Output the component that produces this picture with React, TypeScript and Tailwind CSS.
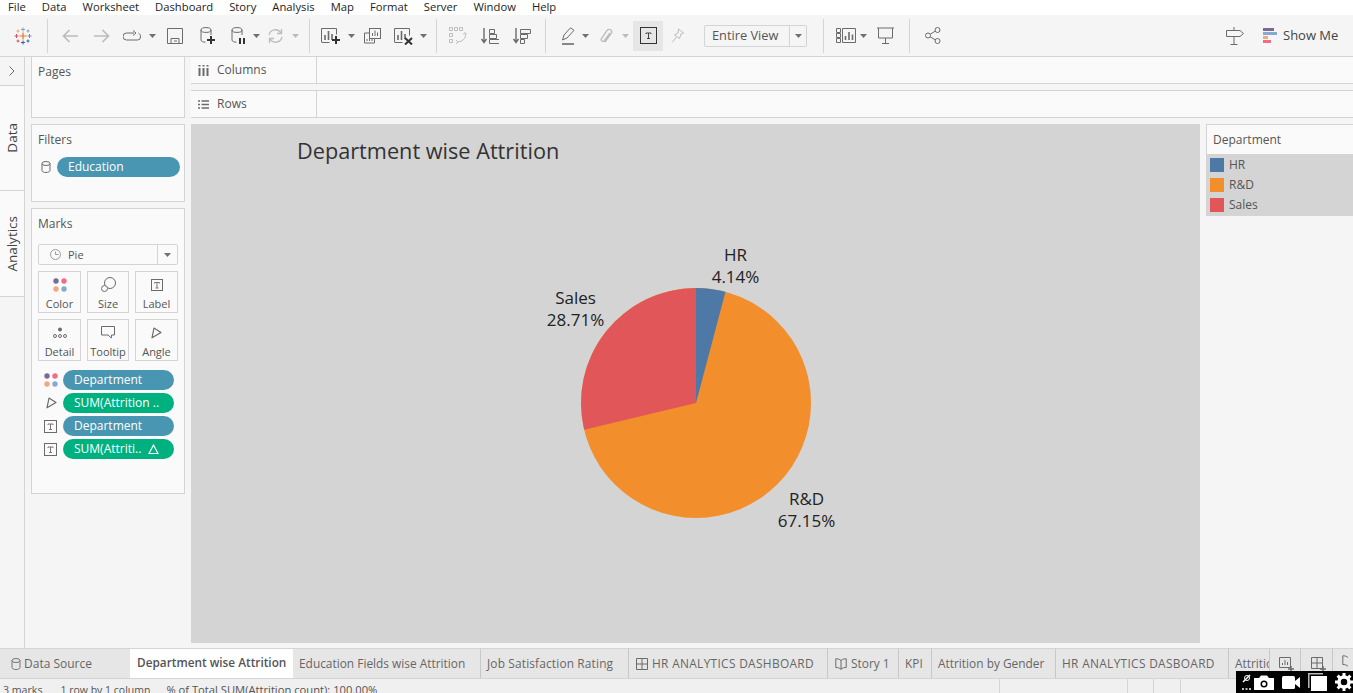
import React from "react";

const G = "#6b6b6b";
const L = "#bcbcbc";

function I({ w, h, className, children }: { w: number; h: number; className?: string; children: React.ReactNode }) {
  return (
    <svg width={w} height={h} viewBox={`0 0 ${w} ${h}`} fill="none" className={"shrink-0 " + (className ?? "")}>
      {children}
    </svg>
  );
}

function Caret({ className, light }: { className?: string; light?: boolean }) {
  return (
    <I w={7} h={4} className={className}>
      <path d="M0 0h7L3.5 4z" fill={light ? L : "#707070"} />
    </I>
  );
}

function Sep({ className }: { className?: string }) {
  return <div className={"h-[34px] w-px shrink-0 bg-[#d4d4d4] " + (className ?? "")} />;
}

function Cross({ x, y, r, c, t = 1 }: { x: number; y: number; r: number; c: string; t?: number }) {
  return <path d={`M${x - r} ${y}h${2 * r}M${x} ${y - r}v${2 * r}`} stroke={c} strokeWidth={t} />;
}

function Logo({ className }: { className?: string }) {
  return (
    <I w={18} h={18} className={className}>
      <Cross x={9} y={9} r={3.5} c="#e8762c" t={1.2} />
      <Cross x={9} y={2.5} r={2} c="#7fa6b8" />
      <Cross x={9} y={15.5} r={2} c="#3b5f95" />
      <Cross x={2.5} y={9} r={2} c="#d4505f" />
      <Cross x={15.5} y={9} r={2} c="#7f88ad" />
      <Cross x={4} y={4} r={1.5} c="#eda06c" />
      <Cross x={14} y={4} r={1.5} c="#7fa6b8" />
      <Cross x={4} y={14} r={1.5} c="#d4505f" />
      <Cross x={14} y={14} r={1.5} c="#3b5f95" />
    </I>
  );
}

function Db({ c = G, className }: { c?: string; className?: string }) {
  return (
    <I w={10} h={12} className={className}>
      <ellipse cx={5} cy={2.5} rx={4} ry={2} stroke={c} />
      <path d="M1 2.5v7c0 1.2 1.8 2 4 2s4-.8 4-2v-7" stroke={c} />
    </I>
  );
}

function TBox({ className, size = 12, c = G }: { className?: string; size?: number; c?: string }) {
  return (
    <I w={size} h={size} className={className}>
      <rect x={0.5} y={0.5} width={size - 1} height={size - 1} stroke={c} />
      <path d={`M${size / 2 - 2.5} ${size / 2 - 1.5}v-1h5v1M${size / 2} ${size / 2 - 2.5}v5.5M${size / 2 - 1.5} ${size / 2 + 3}h3`} stroke={c} strokeWidth={0.9} />
    </I>
  );
}

function Dots({ className }: { className?: string }) {
  return (
    <I w={14} h={14} className={className}>
      <circle cx={3} cy={3} r={2.7} fill="#7b6a96" />
      <circle cx={11} cy={3} r={2.7} fill="#ef6f80" />
      <circle cx={3} cy={11} r={2.7} fill="#f3a77b" />
      <circle cx={11} cy={11} r={2.7} fill="#85a9d0" />
    </I>
  );
}

function AngleIcon({ className }: { className?: string }) {
  return (
    <I w={11} h={12} className={className}>
      <path d="M3 1 10 5.500 1 10.800Z" stroke={G} strokeWidth={1.2} strokeLinejoin="round" />
    </I>
  );
}

function Toolbar() {
  return (
    <div className="flex h-[42px] shrink-0 items-center border-b border-[#d4d4d4] bg-[#f5f5f5]">
      <Logo className="ml-[14px]" />
      <Sep className="ml-[15px]" />
      <I w={16} h={14} className="ml-[14px]"><path d="M16 7H1.5M7.5 1 1.5 7l6 6" stroke={L} strokeWidth={1.7} /></I>
      <I w={16} h={14} className="ml-[16px]"><path d="M0 7h14.5M8.5 1l6 6-6 6" stroke={L} strokeWidth={1.7} /></I>
      <I w={18} h={12} className="ml-[13px]"><path d="M11 3H3.5a3 3 0 0 0 0 7h11a3 3 0 0 0 3-3c0-2-.7-3-2-4M10 .5 13 3l-3 2.5" stroke={G} /></I>
      <Caret className="ml-[8px]" />
      <I w={16} h={16} className="ml-[11px]"><path d="M.5.5h15v15H.5zM4 15.5v-5h8v5M7 13h3" stroke={G} /></I>
      <I w={15} h={18} className="ml-[17px]">
        <ellipse cx={6} cy={3} rx={5} ry={2.4} stroke={G} />
        <path d="M1 3v10c0 1.3 2 2.2 4.5 2.2M11 3v5" stroke={G} />
        <path d="M11 9v8M7 13h8" stroke="#333" strokeWidth={2} />
      </I>
      <I w={14} h={18} className="ml-[16px]">
        <ellipse cx={6} cy={3} rx={5} ry={2.4} stroke={G} />
        <path d="M1 3v10c0 1.3 2 2.2 4.5 2.2M11 3v5" stroke={G} />
        <path d="M9 11v6M13 11v6" stroke="#333" strokeWidth={2} />
      </I>
      <Caret className="ml-[8px]" />
      <I w={17} h={16} className="ml-[7px]"><path d="M2 7a6.5 6.5 0 0 1 12-2M15 9a6.5 6.5 0 0 1-12 2M14.5 1v4.5H10M2.5 15v-4.5H7" stroke={L} strokeWidth={1.3} /></I>
      <Caret light className="ml-[8px]" />
      <Sep className="ml-[10px]" />
      <I w={21} h={18} className="ml-[11px]">
        <path d="M.5 15V1.5h15v6M.5 15.5h8" stroke={G} />
        <path d="M4 13V8M7.5 13V4M11 13V7" stroke={G} strokeWidth={1.6} />
        <path d="M15 9v8M11 13h8" stroke="#333" strokeWidth={2} />
      </I>
      <Caret className="ml-[6px]" />
      <I w={17} h={16} className="ml-[9px]">
        <rect x={5.5} y={0.5} width={11} height={10} stroke={G} />
        <path d="M8.5 8V5M11 8V2.5M13.5 8V4.5" stroke={G} />
        <path d="M5 5H.5v10h10v-4M3 13v-2M5.500 13v-3M8 13v-2" stroke={G} />
      </I>
      <I w={19} h={18} className="ml-[13px]">
        <path d="M.5 15V1.5h15v7M.5 15.5h8" stroke={G} />
        <path d="M4 13V8M7.5 13V4M11 12V7" stroke={G} strokeWidth={1.6} />
        <path d="m11 11 7 6.5M18 11l-7 6.5" stroke="#333" strokeWidth={2} />
      </I>
      <Caret className="ml-[7px]" />
      <Sep className="ml-[9px]" />
      <I w={18} h={17} className="ml-[12px]">
        <path d="M.5.5h3v3h-3zM5.500.5h3v3h-3zM10.500.5h3v3h-3zM.5 6.500h3v3h-3zM.5 12.500h3v3h-3z" stroke={L} />
        <path d="M16 6c1.500 4-1 8-7 9M7 13l2 2-2 2M14 7.500 16 5.500l2 2" stroke={L} />
      </I>
      <I w={18} h={16} className="ml-[14px]">
        <path d="M3 0v14M.5 11 3 14.500 5.500 11" stroke={G} strokeWidth={1.4} />
        <path d="M8.500 1.500h5v4h-5zM8.500 6.500h7v4h-7zM8.500 11.500h10v4h-10z" stroke={G} />
      </I>
      <I w={18} h={16} className="ml-[14px]">
        <path d="M3 0v14M.5 11 3 14.500 5.500 11" stroke={G} strokeWidth={1.4} />
        <path d="M7.500 1.500h10v4h-10zM7.500 6.500h7v4h-7zM7.500 11.500h4v4h-4z" stroke={G} />
      </I>
      <Sep className="ml-[14px]" />
      <I w={13} h={18} className="ml-[16px]">
        <path d="M.5 13 2 8 8.500.8l3.500 2.500L5 11z" stroke={G} />
        <path d="M0 17h12" stroke={G} strokeWidth={1.6} />
      </I>
      <Caret className="ml-[7px]" />
      <I w={14} h={16} className="ml-[10px]"><path d="M11 5 5.500 12.500c-1.500 2-4.500 0-3-2L8 2.500c2-2.500 6 0 4.500 2.500L6 14" stroke={L} strokeWidth={1.3} /></I>
      <Caret light className="ml-[9px]" />
      <div className="ml-[4px] flex h-[30px] w-[30px] shrink-0 items-center justify-center bg-[#e6e6e6]">
        <TBox size={17} c="#333" />
      </div>
      <I w={13} h={16} className="ml-[8px]"><path d="m7.500 1 5 4-2.500 1-1.500 4.500L3.500 7l3.500-2zM5.500 9 1 14.500" stroke={L} /></I>
      <div className="ml-[20px] flex h-[22px] w-[103px] shrink-0 items-center rounded-[2px] border border-[#d4d4d4] text-[12.8px] text-[#555]">
        <span className="w-[84px] pl-[7px]">Entire View</span>
        <div className="flex h-full flex-1 items-center justify-center border-l border-[#d4d4d4]">
          <Caret />
        </div>
      </div>
      <Sep className="ml-[16px]" />
      <I w={20} h={15} className="ml-[12px]">
        <path d="M.5.5h4v4h-4zM.5 5.500h4v4h-4zM.5 10.500h4v4h-4zM6.500.5h13v14h-13z" stroke={G} />
        <path d="M9.500 12V8M13 12V4M16.500 12V6.500" stroke={G} strokeWidth={1.6} />
      </I>
      <Caret className="ml-[4px]" />
      <I w={17} h={17} className="ml-[10px]">
        <path d="M0 1h17M1.500 1v10h14V1M8.500 11v5M5 16.500h7" stroke={G} />
      </I>
      <Sep className="ml-[15px]" />
      <I w={16} h={17} className="ml-[15px]">
        <circle cx={3} cy={8.500} r={2.500} stroke={G} />
        <circle cx={12.500} cy={3} r={2.500} stroke={G} />
        <circle cx={12.500} cy={14} r={2.500} stroke={G} />
        <path d="m5.200 7.200 5-3M5.200 9.800l5 3" stroke={G} />
      </I>
      <I w={18} h={18} className="ml-[285px]">
        <path d="M.5 3.500h13.500l3.500 3-3.500 3H.5zM8 0v3.500M8 9.500V17M4.500 17.500h7" stroke={G} />
      </I>
      <I w={14} h={16} className="ml-[19px]">
        <path d="M0 1.500h11" stroke="#7b6a96" strokeWidth={3} />
        <path d="M0 5.500h14" stroke="#85a9d0" strokeWidth={3} />
        <path d="M0 9.500h5" stroke="#f3a77b" strokeWidth={3} />
        <path d="M0 13.500h8" stroke="#ef6f80" strokeWidth={3} />
      </I>
      <span className="ml-[6px] text-[13px] text-[#444]">Show Me</span>
    </div>
  );
}

function Rail() {
  return (
    <div className="flex w-[25px] shrink-0 flex-col border-r border-[#d4d4d4] text-[13.5px] text-[#444]">
      <div className="flex h-[29px] items-center justify-center border-b border-[#d4d4d4]">
        <I w={6} h={10}><path d="m.5.5 4.500 4.500L.5 9.500" stroke={G} /></I>
      </div>
      <div className="flex h-[105px] items-center justify-center border-b border-[#d4d4d4] bg-[#fafafa] pl-[1px]">
        <span className="rotate-180 [writing-mode:vertical-rl]">Data</span>
      </div>
      <div className="flex h-[106px] items-center justify-center border-b border-[#d4d4d4] bg-[#fafafa] pl-[1px]">
        <span className="rotate-180 [writing-mode:vertical-rl]">Analytics</span>
      </div>
    </div>
  );
}

function Pill({ color, wide, children }: { color: "blue" | "green"; wide?: boolean; children: React.ReactNode }) {
  return (
    <div
      className={
        "flex h-[20px] items-center rounded-full pl-[11px] text-[12px] leading-none text-white " +
        (color === "blue" ? "bg-[#4996b2] " : "bg-[#00b180] ") +
        (wide ? "w-[123px]" : "w-[111px]")
      }
    >
      {children}
    </div>
  );
}

function MarkBtn({ label, icon }: { label: string; icon: React.ReactNode }) {
  return (
    <div className="flex h-[42px] flex-col items-center border border-[#d4d4d4] text-[11px] leading-none text-[#555]">
      <div className="flex h-[25px] items-center justify-center">{icon}</div>
      <span className="mt-[1px]">{label}</span>
    </div>
  );
}

function LeftPane() {
  return (
    <div className="ml-[6px] flex w-[154px] shrink-0 flex-col gap-[6px]">
      <div className="h-[61px] border border-t-0 border-[#d4d4d4] bg-[#fafafa] pl-[6px] pt-[7px] text-[12px] leading-[16px] text-[#555]">Pages</div>
      <div className="h-[78px] border border-[#d4d4d4] bg-[#fafafa] pl-[6px] pt-[7px] text-[12px] leading-[16px] text-[#555]">
        Filters
        <div className="mt-[9px] flex items-center">
          <Db className="ml-[3px] mr-[6px]" />
          <Pill color="blue" wide>Education</Pill>
        </div>
      </div>
      <div className="h-[286px] border border-[#d4d4d4] bg-[#fafafa] px-[6px] pt-[7px] text-[12px] leading-[16px] text-[#555]">
        Marks
        <div className="mt-[12px] flex h-[21px] w-[140px] items-center rounded-[2px] border border-[#d4d4d4] text-[11px]">
          <I w={11} h={11} className="ml-[11px]">
            <circle cx={5.500} cy={5.500} r={5} stroke="#9a9a9a" />
            <path d="M5.500 2.500v3H8.500" stroke="#9a9a9a" />
          </I>
          <span className="ml-[7px] w-[89px]">Pie</span>
          <div className="flex h-full flex-1 items-center justify-center border-l border-[#d4d4d4]">
            <Caret />
          </div>
        </div>
        <div className="mt-[6px] grid w-[140px] grid-cols-[43px_42px_43px] gap-x-[6px] gap-y-[6px]">
          <MarkBtn label="Color" icon={<Dots />} />
          <MarkBtn
            label="Size"
            icon={
              <I w={15} h={15}>
                <circle cx={9} cy={6} r={5.500} stroke={G} />
                <circle cx={3.500} cy={11.500} r={3} stroke={G} fill="#fafafa" />
              </I>
            }
          />
          <MarkBtn label="Label" icon={<TBox />} />
          <MarkBtn
            label="Detail"
            icon={
              <I w={14} h={12}>
                <circle cx={7} cy={2.500} r={2} fill={G} />
                <circle cx={2} cy={9} r={1.500} stroke={G} />
                <circle cx={7} cy={9} r={1.500} stroke={G} />
                <circle cx={12} cy={9} r={1.500} stroke={G} />
              </I>
            }
          />
          <MarkBtn
            label="Tooltip"
            icon={
              <I w={14} h={13}>
                <path d="M.5.5h13v8.500h-3l-.2 3L7 9H.5z" stroke={G} strokeLinejoin="round" />
              </I>
            }
          />
          <MarkBtn label="Angle" icon={<AngleIcon />} />
        </div>
        <div className="mt-[9px] flex flex-col gap-[3px]">
          <div className="flex items-center">
            <Dots className="ml-[6px] mr-[5px]" />
            <Pill color="blue">Department</Pill>
          </div>
          <div className="flex items-center">
            <AngleIcon className="ml-[8px] mr-[6px]" />
            <Pill color="green">SUM(Attrition ..</Pill>
          </div>
          <div className="flex items-center">
            <TBox size={13} className="ml-[6px] mr-[6px]" />
            <Pill color="blue">Department</Pill>
          </div>
          <div className="flex items-center">
            <TBox size={13} className="ml-[6px] mr-[6px]" />
            <Pill color="green">
              SUM(Attriti..
              <I w={11} h={10} className="ml-[7px]"><path d="M5.500 1 10 9.500H1z" stroke="#fff" strokeWidth={1.2} /></I>
            </Pill>
          </div>
        </div>
      </div>
    </div>
  );
}

function Shelf({ label, icon, tall }: { label: string; icon: React.ReactNode; tall?: boolean }) {
  return (
    <div className={"flex border-[#d4d4d4] bg-[#fafafa] text-[12px] text-[#555] " + (tall ? "h-[28px] border-y" : "h-[27px] border-b")}>
      <div className="flex w-[126px] items-center border-r border-[#d4d4d4] pl-[7px]">
        {icon}
        <span className="ml-[8px]">{label}</span>
      </div>
    </div>
  );
}

function Pie() {
  const labels: [number, number, string][] = [
    [735, 254, "HR"],
    [735, 276, "4.14%"],
    [575, 297, "Sales"],
    [575, 319, "28.71%"],
    [806, 498, "R&D"],
    [806, 520, "67.15%"],
  ];
  return (
    <svg width={400} height={400} viewBox="495.5 202.5 400 400" className="shrink-0">
      <circle cx={695.5} cy={402.5} r={115} fill="#f28e2b" />
      <path d="M695.500 402.500V287.500A115 115 0 0 1 725 291.300Z" fill="#4e79a7" />
      <path d="M695.500 402.500V287.500A115 115 0 0 0 583.700 429.300Z" fill="#e15759" />
      {labels.map(([x, y, t]) => (
        <text key={t} x={x} y={y + 6} textAnchor="middle" fontSize={17} fill="#222" fontFamily="'Open Sans', sans-serif">
          {t}
        </text>
      ))}
    </svg>
  );
}

function Center() {
  return (
    <div className="ml-[6px] flex min-w-0 flex-1 flex-col">
      <Shelf
        label="Columns"
        icon={
          <I w={11} h={11}>
            <path d="M1.500 3v8M5.500 3v8M9.500 3v8M1.500 0v1.500M5.500 0v1.500M9.500 0v1.500" stroke={G} strokeWidth={2} />
          </I>
        }
      />
      <div className="mt-[6px]">
        <Shelf
          label="Rows"
          tall
          icon={
            <I w={11} h={9}>
              <path d="M0 1h2M0 4.500h2M0 8h2M3.500 1H11M3.500 4.500H11M3.500 8H11" stroke={G} strokeWidth={1.500} />
            </I>
          }
        />
      </div>
      <div className="mt-[6px] flex min-h-0 flex-1">
        <div className="flex h-[519px] w-[1009px] shrink-0 flex-col bg-[#d4d4d4]">
          <div className="h-[38px] pl-[106px] pt-[12px] text-[21.7px] font-medium leading-[30px] text-[#333]">Department wise Attrition</div>
          <div className="flex flex-1 items-center justify-center overflow-hidden">
            <Pie />
          </div>
        </div>
        <div className="ml-[6px] flex-1">
          <div className="flex h-[30px] items-center border-l border-t border-[#d4d4d4] bg-[#fafafa] pl-[6px] text-[12px] text-[#555]">Department</div>
          <div className="flex flex-col gap-[6px] bg-[#d4d4d4] pb-[4px] pl-[4px] pt-[4px] text-[12px] leading-[14px] text-[#555]">
            {[
              ["HR", "bg-[#4e79a7]"],
              ["R&D", "bg-[#f28e2b]"],
              ["Sales", "bg-[#e15759]"],
            ].map(([t, c]) => (
              <div key={t} className="flex items-center">
                <div className={"h-[14px] w-[14px] " + c} />
                <span className="ml-[5px]">{t}</span>
              </div>
            ))}
          </div>
        </div>
      </div>
    </div>
  );
}

function Tab({ w, children, className }: { w: string; children: React.ReactNode; className?: string }) {
  return (
    <div className={"flex h-full shrink-0 items-center overflow-hidden whitespace-nowrap border-r border-[#c8c8c8] pl-[6px] pt-[1px] text-[11.9px] text-[#666] " + w + " " + (className ?? "")}>
      {children}
    </div>
  );
}

function Tabs() {
  return (
    <div className="flex h-[31px] shrink-0 overflow-hidden border-y border-[#d4d4d4] bg-[#e6e6e6]">
      <div className="flex w-[130px] shrink-0 items-center pl-[11px] pt-[1px] text-[12px] text-[#666]">
        <Db c="#777" className="mr-[3px]" />
        Data Source
      </div>
      <div className="flex w-[163px] shrink-0 items-center whitespace-nowrap bg-white pb-[1px] pl-[7px] text-[11.8px] font-semibold text-[#555]">Department wise Attrition</div>
      <Tab w="w-[188px]">Education Fields wise Attrition</Tab>
      <Tab w="w-[148px]" className="tracking-[0.15px]">Job Satisfaction Rating</Tab>
      <Tab w="w-[199px]" className="pl-[7px] tracking-[0.32px]">
        <I w={12} h={12} className="mr-[4px]"><path d="M.5.5h11v11H.5zM6 .5v11M.5 6h11" stroke={G} /></I>
        HR ANALYTICS DASHBOARD
      </Tab>
      <Tab w="w-[71px]" className="pl-[7px]">
        <I w={12} h={12} className="mr-[4px]"><path d="M6 2.500C4.500 1 2.500.8.800.8v8.700c2 0 3.700.3 5.200 1.800 1.500-1.500 3.200-1.800 5.200-1.800V.8C9.500.8 7.500 1 6 2.500zM6 2.500v8.800" stroke={G} /></I>
        Story 1
      </Tab>
      <Tab w="w-[33px]">KPI</Tab>
      <Tab w="w-[124px]">Attrition by Gender</Tab>
      <Tab w="w-[173px]" className="tracking-[0.32px]">HR ANALYTICS DASBOARD</Tab>
      <Tab w="w-[41px]">Attrition</Tab>
      <Tab w="w-[31px]" className="pl-[9px]">
        <I w={16} h={15}>
          <path d="M.5.5h11v10H.5zM3.500 8V6M6 8V3M8.500 8V5" stroke={G} />
          <path d="M12 9v6M9 12h6" stroke={G} strokeWidth={1.500} />
        </I>
      </Tab>
      <Tab w="w-[32px]" className="pl-[10px]">
        <I w={15} h={15}>
          <path d="M.5.5h11v11H.5zM6 .5v11M.5 6h11" stroke={G} />
          <path d="M12 9v6M9 12h6" stroke={G} strokeWidth={1.500} />
        </I>
      </Tab>
      <div className="pl-[9px] pt-[6px]">
        <I w={12} h={13}><path d="M6 2.500C4.500 1 2.500.8.800.8v8.700c2 0 3.700.3 5.200 1.800" stroke={G} /></I>
      </div>
    </div>
  );
}

function Status() {
  const cells = ["w-[128px]", "w-[26px]", "w-[27px]", "w-[48px]"];
  return (
    <div className="flex h-[14px] shrink-0 items-start overflow-hidden bg-[#f0f0f0] text-[11.2px] leading-[14px] text-[#555]">
      <div className="flex w-[999px] shrink-0 pl-[3px] pt-[4px]">
        <span className="text-[10.6px]">3 marks</span>
        <span className="ml-[18px] text-[10.5px]">1 row by 1 column</span>
        <span className="ml-[16px]">% of Total SUM(Attrition count): 100.00%</span>
      </div>
      {cells.map((c) => (
        <div key={c} className={"h-full shrink-0 border-l border-[#d4d4d4] " + c} />
      ))}
    </div>
  );
}

function Recorder() {
  return (
    <div className="absolute bottom-0 right-0 flex h-[22px] w-[117px] items-center overflow-hidden bg-black pl-[6px]">
      <I w={9} h={18}>
        <circle cx={5} cy={5} r={2.500} stroke="#fff" />
        <path d="M1 9 8 2" stroke="#fff" strokeWidth={1.500} />
        <path d="M0 16h2M3.500 16h2M7 16h2" stroke="#fff" strokeWidth={1.500} />
      </I>
      <I w={20} h={15} className="ml-[3px]">
        <path d="M0 3h5l2-2.500h6L15 3h5v12H0z" fill="#fff" />
        <circle cx={10} cy={9} r={3.500} fill="#000" />
        <circle cx={10} cy={9} r={2} fill="#fff" />
      </I>
      <I w={18} h={13} className="ml-[8px]">
        <rect x={0} y={0} width={13} height={13} rx={1.500} fill="#fff" />
        <path d="m13 5 5-4v11l-5-4z" fill="#fff" />
      </I>
      <I w={19} h={18} className="ml-[8px]">
        <path d="M.8 15V.8H15" stroke="#bbb" strokeWidth={1.500} />
        <rect x={3} y={3} width={16} height={15} fill="#fff" />
      </I>
      <I w={18} h={18} className="ml-[8px]">
        <circle cx={9} cy={9} r={5} stroke="#fff" strokeWidth={3.500} />
        <path d="M9 0v4M9 14v4M0 9h4M14 9h4M2.600 2.600l3 3M12.400 12.400l3 3M2.600 15.400l3-3M12.400 5.600l3-3" stroke="#fff" strokeWidth={3} />
      </I>
    </div>
  );
}

export default function App() {
  return (
    <div className="relative flex h-[693px] w-[1353px] flex-col overflow-hidden bg-[#f5f5f5] font-['Open_Sans',sans-serif]">
      <div className="flex h-[15px] shrink-0 items-start gap-[16px] bg-white pl-[8px] text-[11.25px] leading-[13px] text-[#222]">
        {["File", "Data", "Worksheet", "Dashboard", "Story", "Analysis", "Map", "Format", "Server", "Window", "Help"].map((m) => (
          <span key={m}>{m}</span>
        ))}
      </div>
      <Toolbar />
      <div className="flex min-h-0 flex-1">
        <Rail />
        <LeftPane />
        <Center />
      </div>
      <Tabs />
      <Status />
      <Recorder />
    </div>
  );
}
